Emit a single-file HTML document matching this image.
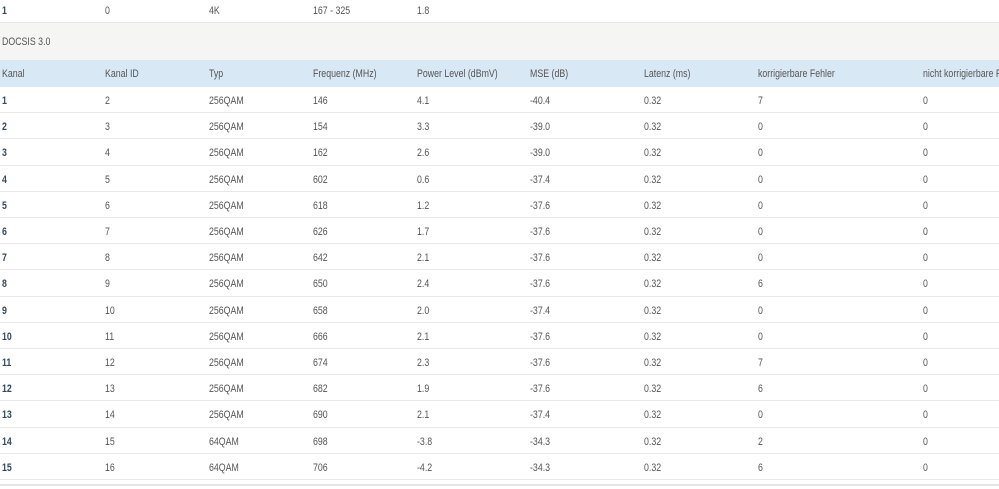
<!DOCTYPE html>
<html><head><meta charset="utf-8"><style>
body{margin:0;width:999px;height:489px;overflow:hidden;background:#fff;font-family:"Liberation Sans",sans-serif;font-size:11px;color:#555;position:relative}
.r{position:absolute;left:0;width:999px;border-bottom:1px solid #e8e8e8;box-sizing:border-box}
.c{position:absolute;white-space:nowrap;transform:scaleX(0.8);transform-origin:0 0}
.b{font-weight:bold;color:#34495e}
</style></head><body>
<div class="r" style="top:0;height:23px;border-bottom:1px solid #e4e4e4">
<span class="c b" style="left:2px;top:5px">1</span><span class="c" style="left:105px;top:5px">0</span><span class="c" style="left:209px;top:5px">4K</span><span class="c" style="left:313px;top:5px">167 - 325</span><span class="c" style="left:417px;top:5px">1.8</span></div>
<div class="r" style="top:23px;height:37px;background:#f5f5f3;border:none"><span class="c" style="left:2px;top:13px">DOCSIS 3.0</span></div>
<div class="r" style="top:60px;height:27px;background:#d9e8f5;border:none">
<span class="c" style="left:2px;top:8px">Kanal</span><span class="c" style="left:105px;top:8px">Kanal ID</span><span class="c" style="left:209px;top:8px">Typ</span><span class="c" style="left:313px;top:8px">Frequenz (MHz)</span><span class="c" style="left:417px;top:8px">Power Level (dBmV)</span><span class="c" style="left:530px;top:8px">MSE (dB)</span><span class="c" style="left:644px;top:8px">Latenz (ms)</span><span class="c" style="left:758px;top:8px">korrigierbare Fehler</span><span class="c" style="left:923px;top:8px">nicht korrigierbare Fehler</span></div>
<div id="rows"></div>
<div style="position:absolute;left:0;top:484px;width:999px;height:2px;background:#e4e4e4"></div>
<script>
var d=[[1,2,"256QAM",146,"4.1","-40.4",7],[2,3,"256QAM",154,"3.3","-39.0",0],[3,4,"256QAM",162,"2.6","-39.0",0],[4,5,"256QAM",602,"0.6","-37.4",0],[5,6,"256QAM",618,"1.2","-37.6",0],[6,7,"256QAM",626,"1.7","-37.6",0],[7,8,"256QAM",642,"2.1","-37.6",0],[8,9,"256QAM",650,"2.4","-37.6",6],[9,10,"256QAM",658,"2.0","-37.4",0],[10,11,"256QAM",666,"2.1","-37.6",0],[11,12,"256QAM",674,"2.3","-37.6",7],[12,13,"256QAM",682,"1.9","-37.6",6],[13,14,"256QAM",690,"2.1","-37.4",0],[14,15,"64QAM",698,"-3.8","-34.3",2],[15,16,"64QAM",706,"-4.2","-34.3",6]];
var xs=[2,105,209,313,417,530,644,758,923],h="";
d.forEach(function(r,i){var t=87+26.2*i;var v=[r[0],r[1],r[2],r[3],r[4],r[5],"0.32",r[6],0];
h+='<div class="r" style="top:'+t+'px;height:26.2px">';
v.forEach(function(x,j){h+='<span class="c'+(j==0?' b':'')+'" style="left:'+xs[j]+'px;top:8px">'+x+'</span>';});
h+='</div>';});
document.getElementById("rows").innerHTML=h;
</script>
</body></html>
